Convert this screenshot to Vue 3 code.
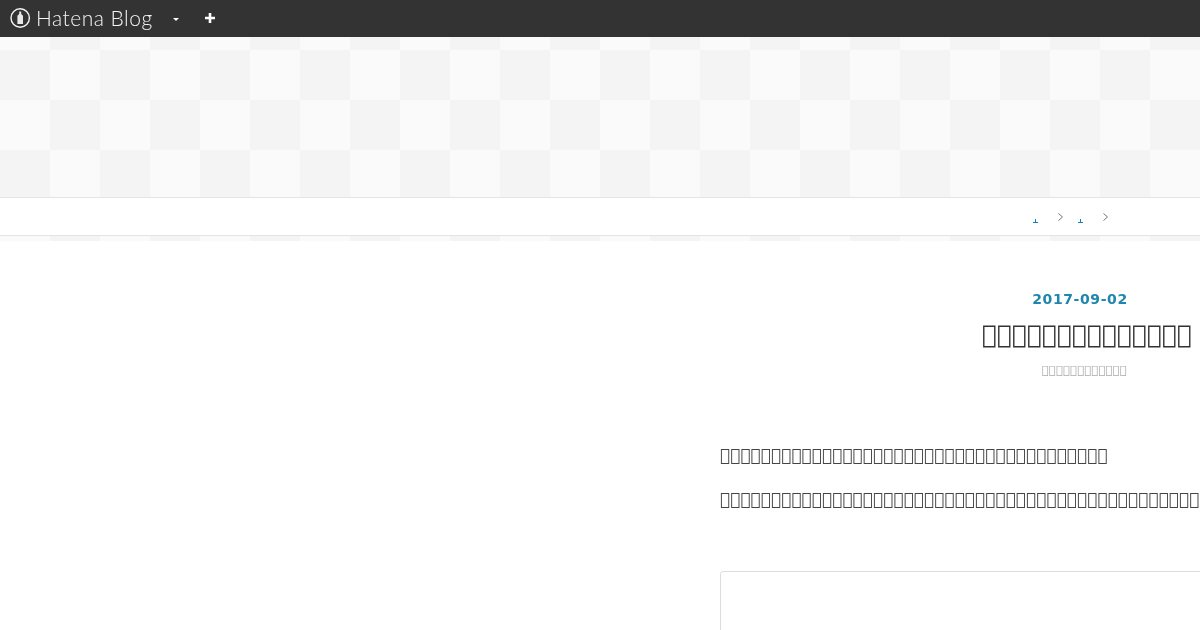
<template>
  <div class="page">
    <header class="topbar">
      <a class="logo">
        <svg class="logo-mark" width="21" height="21" viewBox="0 0 21 21">
          <circle cx="10.2" cy="10" r="9.2" fill="none" stroke="#f4f4f4" stroke-width="1.4" />
          <path d="M9.2 3.6 H11.2 V6 L13 7.8 V16 H7.4 V7.8 L9.2 6 Z" fill="#e8e8e8" />
        </svg>
        <span class="logo-text">Hatena Blog</span>
      </a>
      <span class="caret"></span>
      <span class="plus">
        <svg width="10" height="10" viewBox="0 0 10 10"><path d="M5 0v10M0 5h10" stroke="#fff" stroke-width="2.6" /></svg>
      </span>
    </header>

    <div class="banner"></div>

    <nav class="crumbs">
      <div class="crumbs-inner">
        <template v-for="n in 2" :key="n">
          <a class="crumb">
            <svg width="5" height="4" viewBox="0 0 5 4"><path d="M0 3.5H5M2.5 0V3" fill="none" stroke="#1a7fae" /></svg>
          </a>
          <svg class="sep" width="5" height="8" viewBox="0 0 5 8"><path d="M.5 .5L4.5 4L.5 7.5" fill="none" stroke="#777" /></svg>
        </template>
      </div>
    </nav>

    <main class="content">
      <div class="article">
        <div class="date">2017-09-02</div>
        <h1 class="title">{{ tofu(14) }}</h1>
        <div class="sub">{{ tofu(12) }}</div>
        <p class="para">{{ tofu(38) }}</p>
        <p class="para">{{ tofu(60) }}</p>
        <div class="card"></div>
      </div>
    </main>
  </div>
</template>

<script setup>
// missing glyph boxes, same as the reference
const tofu = (n) => '\uE000'.repeat(n)
</script>

<style>
html, body {
  margin: 0;
  overflow: hidden;
}
</style>

<style scoped>
.page {
  width: 1200px;
  height: 630px;
  overflow: hidden;
  font-family: "DejaVu Sans", sans-serif;
  background-color: #fafafa;
  background-image: conic-gradient(#f4f4f4 25%, #fafafa 0 50%, #f4f4f4 0 75%, #fafafa 0);
  background-size: 100px 100px;
}

.topbar {
  height: 37px;
  background: #333;
  display: flex;
  align-items: center;
  box-sizing: border-box;
  padding-left: 10px;
}

.logo {
  display: flex;
  align-items: center;
  gap: 5px;
  width: 163px;
  will-change: transform;
}

.logo-mark {
  flex: none;
}

.logo-text {
  font-family: Lato, sans-serif;
  font-weight: 300;
  font-size: 21px;
  line-height: 21px;
  letter-spacing: 0.5px;
  color: #f4f4f4;
  white-space: nowrap;
  margin-top: -2px;
}

.caret {
  width: 0;
  height: 0;
  border-left: 3px solid transparent;
  border-right: 3px solid transparent;
  border-top: 3px solid #fff;
  margin-top: 1px;
}

.plus {
  display: flex;
  margin-left: 26px;
  margin-top: -1px;
}

.banner {
  height: 160px;
}

.crumbs {
  height: 39px;
  box-sizing: border-box;
  background: #fff;
  border-top: 1px solid #e4e4e4;
  border-bottom: 1px solid #e4e4e4;
}

.crumbs-inner {
  display: flex;
  align-items: center;
  height: 100%;
  padding-left: 1033px;
}

.crumb {
  display: flex;
  margin-top: 8px;
}

.sep {
  margin: 0 15px 0 20px;
  flex: none;
}

.content {
  margin-top: 5px;
  height: 400px;
  background: #fff;
}

.article {
  width: 720px;
  margin-left: 720px;
  padding-top: 50px;
  will-change: transform;
}

.date {
  text-align: center;
  font-weight: 700;
  font-size: 14px;
  letter-spacing: 0.6px;
  color: #1f86ad;
  line-height: 17px;
}

.title {
  margin: 10px 0 0 14px;
  text-align: center;
  font-weight: 400;
  font-size: 25px;
  line-height: 34px;
  color: #333;
  white-space: nowrap;
}

.sub {
  margin: 9px 0 0 9px;
  text-align: center;
  font-size: 11.8px;
  line-height: 18px;
  color: #aaa;
  white-space: nowrap;
}

.para {
  margin: 0;
  padding-top: 24px;
  font-size: 17px;
  line-height: 20px;
  color: #444;
  white-space: nowrap;
}

.para:first-of-type {
  padding-top: 66px;
}

.card {
  margin-top: 62px;
  height: 200px;
  box-sizing: border-box;
  border: 1px solid #ddd;
  border-radius: 3px;
}
</style>
